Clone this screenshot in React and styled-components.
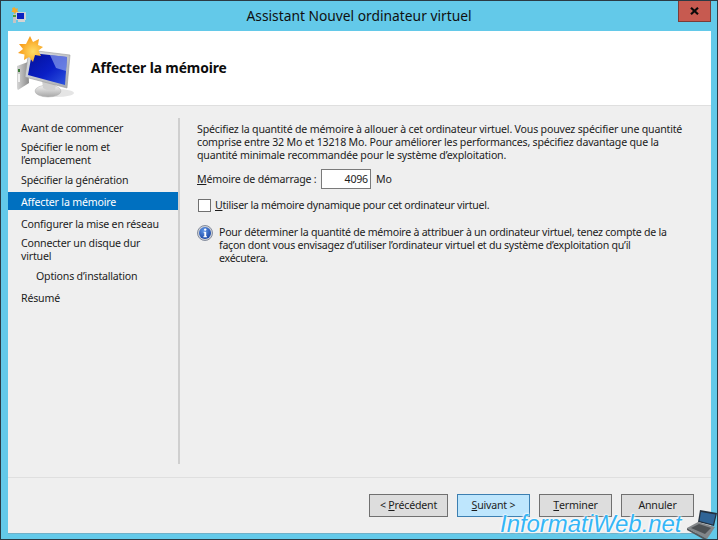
import React from "react";
import styled, { createGlobalStyle } from "styled-components";

const Global = createGlobalStyle`
  html, body { margin: 0; padding: 0; background: #63c9e9; }
  * { box-sizing: border-box; }
`;

const Win = styled.div`
  position: relative;
  width: 718px;
  height: 540px;
  overflow: hidden;
  display: flex;
  flex-direction: column;
  background: #63c9e9;
  border: 1px solid #2b3a44;
  font-family: "Noto Sans", "Open Sans", sans-serif;
  font-size: 10.6px;
  letter-spacing: -0.19px;
  line-height: 13px;
  color: #1c1c1c;
`;

const TitleBar = styled.div`
  position: relative;
  flex: none;
  height: 30px;
  display: flex;
  align-items: center;
  justify-content: center;
  padding: 0 7px 0 10px;
`;

const AppIcon = styled.svg`
  position: absolute;
  left: 10px;
  top: 6px;
`;

const Title = styled.div`
  font-size: 13.8px;
  letter-spacing: 0;
  line-height: 20px;
  margin-right: 3px;
  color: #101010;
`;

const Close = styled.div`
  position: absolute;
  right: 6px;
  top: 0;
  width: 33px;
  height: 21px;
  display: flex;
  align-items: center;
  justify-content: center;
  background: #c75a50;
  border: 1px solid #7a3c38;
  border-top: none;
`;

const Client = styled.div`
  flex: 1;
  margin: 0 6px 6px 7px;
  display: flex;
  flex-direction: column;
  background: #efefef;
  box-shadow: 0 1px 0 #6fb0c8;
`;

const Header = styled.div`
  flex: none;
  height: 75px;
  display: flex;
  align-items: center;
  gap: 16px;
  padding: 0 0 3px 7px;
  background: #fff;
  border-bottom: 1px solid #dfdfdf;
`;

const HeaderTitle = styled.div`
  font-size: 13.8px;
  letter-spacing: -0.1px;
  font-weight: 700;
  line-height: 18px;
  color: #0c0c0c;
  margin-top: 3px;
`;

const Main = styled.div`
  flex: 1;
  display: flex;
  min-height: 0;
`;

const Nav = styled.div`
  flex: none;
  width: 172px;
  height: 346px;
  margin-top: 12px;
  border-right: 2px solid #cfcfcf;
  display: flex;
  flex-direction: column;
`;

const NavItem = styled.div`
  display: flex;
  align-items: center;
  width: 170px;
  height: ${(p) => (p.$two ? 27 : 18)}px;
  margin-bottom: ${(p) => (p.$two ? 3 : 4)}px;
  padding: ${(p) => (p.$two ? "1px" : "2px")} 0 0 ${(p) => (p.$sub ? 28 : 13)}px;
  background: ${(p) => (p.$on ? "#0070c0" : "transparent")};
  color: ${(p) => (p.$on ? "#fff" : "#1c1c1c")};
`;

const Body = styled.div`
  flex: 1;
  padding: 17px 20px 0 17px;
  display: flex;
  flex-direction: column;
`;

const Intro = styled.p`
  margin: 0 0 7px;
  white-space: nowrap;
`;

const MemRow = styled.div`
  display: flex;
  align-items: center;
  height: 20px;
`;

const MemLabel = styled.span`
  width: 124px;
  white-space: nowrap;
`;

const Field = styled.div`
  width: 50px;
  height: 20px;
  background: #fff;
  border: 1px solid #7a7a7a;
  text-align: right;
  padding: 3px 2px 0 0;
  margin-right: 5px;
`;

const CheckRow = styled.div`
  display: flex;
  align-items: center;
  gap: 4px;
  height: 14px;
  margin: 9px 0 13px 1px;
`;

const Check = styled.div`
  width: 13px;
  height: 13px;
  background: #fff;
  border: 1px solid #707070;
`;

const CheckLabel = styled.span`
  letter-spacing: -0.28px;
`;

const InfoRow = styled.div`
  display: flex;
  gap: 6px;
  white-space: nowrap;
`;

const InfoText = styled.div`
  padding-top: 1px;
  letter-spacing: -0.26px;
`;

const U = styled.span`
  text-decoration: underline;
  text-underline-offset: 1px;
`;

const Footer = styled.div`
  flex: none;
  height: 56px;
  border-top: 1px solid #dfdfdf;
  display: flex;
  justify-content: flex-end;
  gap: 9px;
  padding: 16px 17px 0 0;
`;

const Btn = styled.div`
  width: ${(p) => p.$w || 73}px;
  height: 23px;
  display: flex;
  align-items: center;
  justify-content: center;
  background: ${(p) => (p.$active ? "#bee6fd" : "#dddddd")};
  border: 1px solid ${(p) => (p.$active ? "#3c7fb1" : "#707070")};
  white-space: pre;
`;

const Watermark = styled.div`
  position: absolute;
  left: 499px;
  top: 509px;
  font-family: "Liberation Sans", Arial, sans-serif;
  font-style: italic;
  font-size: 23.9px;
  letter-spacing: 0;
  line-height: 28px;
  white-space: nowrap;
  color: #35b6f6;
  text-shadow: 0 0 2px #fff, 0 0 2px #fff, 0 0 3px #fff;
`;

const Laptop = styled.svg`
  position: absolute;
  right: 0;
  bottom: 0;
`;

const MonitorIcon = () => (
  <svg width="60" height="62" viewBox="0 0 60 62" style={{ flex: "none" }}>
    <defs>
      <linearGradient id="scr" x1="0" y1="0" x2="1" y2="1">
        <stop offset="0" stopColor="#03109a" />
        <stop offset="0.55" stopColor="#0a1fc6" />
        <stop offset="1" stopColor="#2f57e0" />
      </linearGradient>
      <linearGradient id="tw" x1="0" y1="0" x2="1" y2="0">
        <stop offset="0" stopColor="#d6d6d6" />
        <stop offset="1" stopColor="#8a8a8a" />
      </linearGradient>
      <linearGradient id="st" x1="0" y1="0" x2="0" y2="1">
        <stop offset="0" stopColor="#f4f4f4" />
        <stop offset="1" stopColor="#a6a6a6" />
      </linearGradient>
      <linearGradient id="fr" x1="0" y1="0" x2="1" y2="1">
        <stop offset="0" stopColor="#dfe2e6" />
        <stop offset="1" stopColor="#a8abb0" />
      </linearGradient>
      <radialGradient id="sun" cx="0.6" cy="0.6" r="0.55">
        <stop offset="0" stopColor="#ffdd66" />
        <stop offset="1" stopColor="#f89d1a" />
      </radialGradient>
    </defs>
    <ellipse cx="42" cy="57" rx="17" ry="4" fill="#000" opacity="0.1" />
    <path d="M2 30 L13 26 L14 47 L3 54 Q2 54 2 51 Z" fill="url(#tw)" />
    <rect x="3" y="33" width="2" height="3" fill="#3f7a3a" />
    <rect x="3" y="38" width="2" height="8" fill="#f0f0f0" />
    <ellipse cx="33" cy="55" rx="13" ry="6" fill="url(#st)" stroke="#b0b0b0" strokeWidth="0.5" />
    <path d="M27 44 L41 48 L40 54 Q33 56 28 52 Z" fill="#cfcfcf" />
    <path d="M14 14 L55 19 L52 52 L10 41 Z" fill="url(#fr)" stroke="#9a9a9a" strokeWidth="0.6" />
    <path d="M17 17 L52 21 L50 49 L13 39 Z" fill="url(#scr)" />
    <path d="M35 19 L52 21 L51 35 L41 32 Z" fill="#9fb2f2" opacity="0.6" />
    <path d="M15 0 L18 6 L24 3 L23 9 L28 11 L23.5 14.5 L26 20 L20 19 L18 26 L14 21 L9 24 L9.5 18.5 L3 17 L8 13 L4 8 L11 8 Z" fill="url(#sun)" />
  </svg>
);

const InfoIcon = () => (
  <svg width="16" height="16" viewBox="0 0 16 16" style={{ flex: "none" }}>
    <defs>
      <radialGradient id="inf" cx="0.4" cy="0.3" r="0.8">
        <stop offset="0" stopColor="#5f95e6" />
        <stop offset="1" stopColor="#133f9e" />
      </radialGradient>
    </defs>
    <circle cx="8" cy="8" r="7.5" fill="#cfd2d8" stroke="#868e9e" />
    <circle cx="8" cy="8" r="6" fill="url(#inf)" />
    <circle cx="8.2" cy="4.6" r="1.2" fill="#fff" />
    <path d="M6.6 6.8 H9.2 V11.2 H10 V12.2 H6.4 V11.2 H7.3 V7.8 H6.6 Z" fill="#fff" />
  </svg>
);

export default function App() {
  return (
    <Win>
      <Global />
      <TitleBar>
        <AppIcon width="16" height="16" viewBox="0 0 16 16">
          <rect x="2" y="7" width="3" height="9" fill="#c4c4c4" />
          <rect x="2" y="8" width="3" height="2" fill="#4a9a3a" />
          <rect x="5" y="5" width="10" height="8" fill="#cfd2d6" />
          <rect x="6" y="6" width="7" height="6" fill="#0b22c0" />
          <rect x="7" y="13" width="7" height="2" fill="#d4d4d4" />
          <path d="M3.5 0 L4.6 1.8 L7 1.2 L6.2 3.4 L7.4 5 L5 5.2 L3.5 7 L2.6 5.2 L0.4 4.8 L1.6 3 L1 1.2 Z" fill="#f6ab2a" />
        </AppIcon>
        <Title>Assistant Nouvel ordinateur virtuel</Title>
        <Close>
          <svg width="9" height="8" viewBox="0 0 9 8">
            <path d="M1 0.8 L8 7.2 M8 0.8 L1 7.2" stroke="#0a0a0a" strokeWidth="2.2" />
          </svg>
        </Close>
      </TitleBar>
      <Client>
        <Header>
          <MonitorIcon />
          <HeaderTitle>Affecter la mémoire</HeaderTitle>
        </Header>
        <Main>
          <Nav>
            <NavItem>Avant de commencer</NavItem>
            <NavItem $two>Spécifier le nom et<br />l’emplacement</NavItem>
            <NavItem>Spécifier la génération</NavItem>
            <NavItem $on>Affecter la mémoire</NavItem>
            <NavItem>Configurer la mise en réseau</NavItem>
            <NavItem $two>Connecter un disque dur<br />virtuel</NavItem>
            <NavItem $sub>Options d’installation</NavItem>
            <NavItem>Résumé</NavItem>
          </Nav>
          <Body>
            <Intro>
              Spécifiez la quantité de mémoire à allouer à cet ordinateur virtuel. Vous pouvez spécifier une quantité<br />
              comprise entre 32 Mo et 13218 Mo. Pour améliorer les performances, spécifiez davantage que la<br />
              quantité minimale recommandée pour le système d’exploitation.
            </Intro>
            <MemRow>
              <MemLabel><U>M</U>émoire de démarrage :</MemLabel>
              <Field>4096</Field>
              <span>Mo</span>
            </MemRow>
            <CheckRow>
              <Check />
              <CheckLabel><U>U</U>tiliser la mémoire dynamique pour cet ordinateur virtuel.</CheckLabel>
            </CheckRow>
            <InfoRow>
              <InfoIcon />
              <InfoText>
                Pour déterminer la quantité de mémoire à attribuer à un ordinateur virtuel, tenez compte de la<br />
                façon dont vous envisagez d’utiliser l’ordinateur virtuel et du système d’exploitation qu’il<br />
                exécutera.
              </InfoText>
            </InfoRow>
          </Body>
        </Main>
        <Footer>
          <Btn $w={79}>{"< "}<U>P</U>récédent</Btn>
          <Btn $active><U>S</U>uivant {">"}</Btn>
          <Btn><U>T</U>erminer</Btn>
          <Btn>Annuler</Btn>
        </Footer>
      </Client>
      <Watermark>InformatiWeb.net</Watermark>
      <Laptop width="34" height="32" viewBox="0 0 34 32">
        <path d="M17 3 L34 6 L31 19 L15 15 Z" fill="#23303e" />
        <path d="M18 5 L32.5 7.5 L30 17.5 L16.5 14 Z" fill="#2f6496" />
        <path d="M4 21 L15 15 L32 20 L24 32 Z" fill="#83878a" />
        <path d="M8 21 L16 17 L28 21 L22 27 Z" fill="#4d5154" />
        <path d="M4 21 L24 32 L20 32 L4 23 Z" fill="#55585b" />
      </Laptop>
    </Win>
  );
}
